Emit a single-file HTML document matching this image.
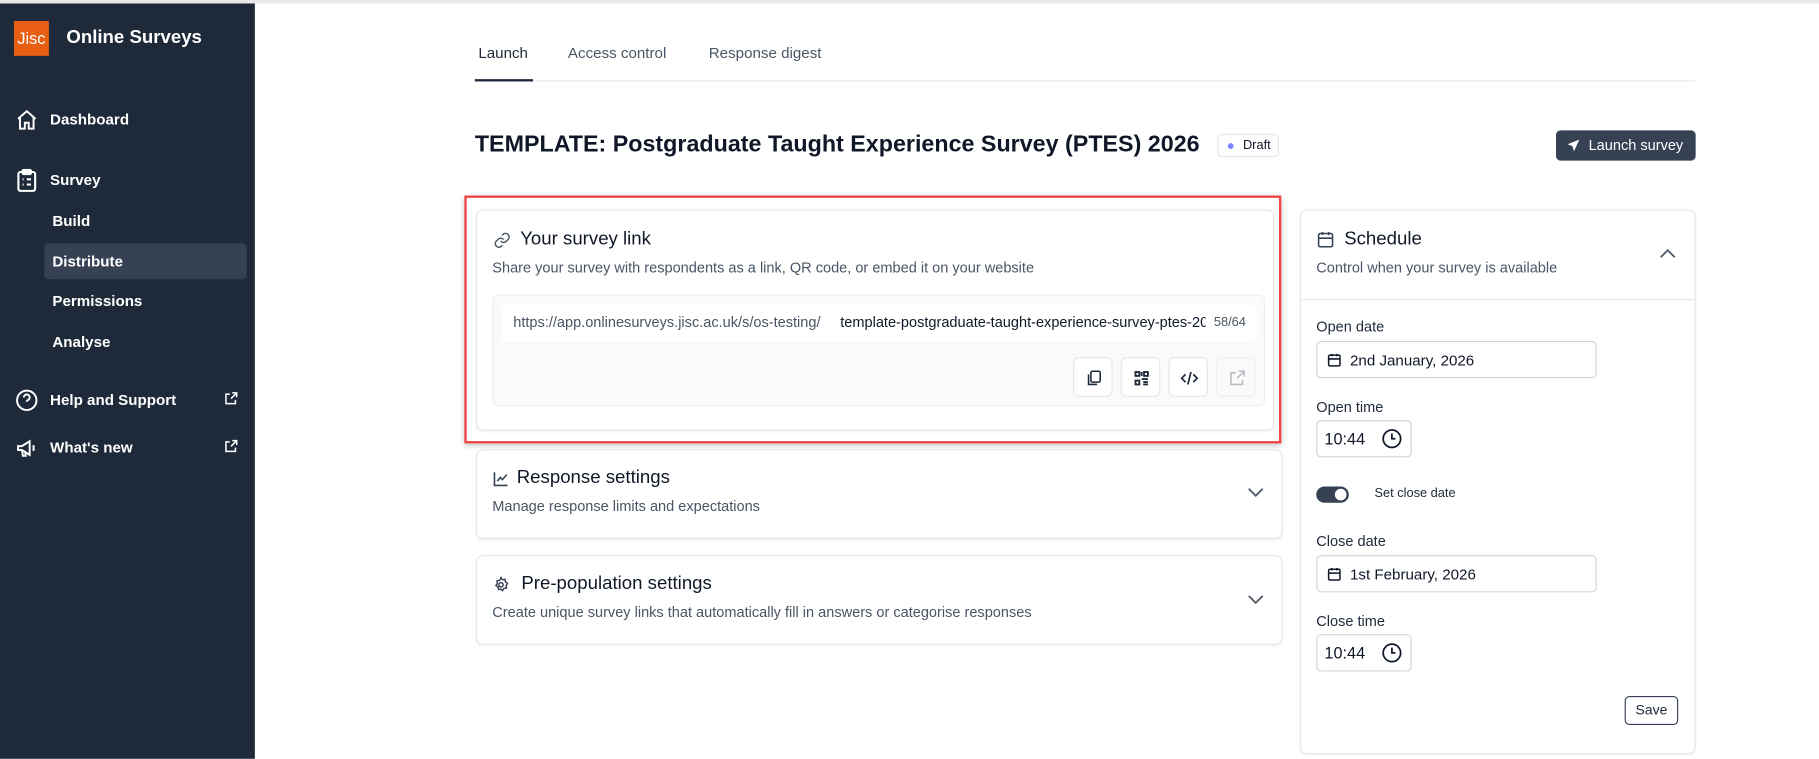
<!DOCTYPE html>
<html><head><meta charset="utf-8">
<style>
*{box-sizing:border-box;margin:0;padding:0}
html,body{width:1819px;height:758px;overflow:hidden;background:#fff;font-family:"Liberation Sans",Arial,sans-serif;}
#s{position:absolute;left:0;top:0;width:1563px;height:652px;transform:scale(1.1638);transform-origin:0 0;}
.a{position:absolute;white-space:nowrap}
.sb{position:absolute;left:0;top:3px;width:219px;height:649px;background:#1e2939;color:#fff}
.nav{position:absolute;font-size:13px;font-weight:bold;color:#fff}
.card{position:absolute;background:#fff;border:1px solid #e5e7eb;border-radius:6px;box-shadow:0 1px 2px rgba(0,0,0,.06)}
.h{font-size:16px;color:#101828}
.d{font-size:12.5px;color:#4a5565}
.btn{position:absolute;width:34px;height:34px;border:1px solid #e5e7eb;border-radius:5px;background:#fff;top:307px}
.btn svg{position:absolute;left:9px;top:9px}
.lbl{position:absolute;font-size:12.5px;color:#1e2939;left:1131px}
.inp{position:absolute;border:1px solid #d1d5dc;border-radius:4px;background:#fff;font-size:13px;color:#101828}
</style></head><body>
<div id="s">
<div class="a" style="left:0;top:0;width:1563px;height:3px;background:#e9e9e9"></div>
<div class="sb">
 <div class="a" style="left:12px;top:15px;width:30px;height:30px;background:#e85e13;color:#fff;font-size:14px;line-height:30px;text-align:center">Jisc</div>
 <div class="a" style="left:57px;top:21px;font-size:16px;font-weight:bold">Online Surveys</div>
 <svg class="a" style="left:13px;top:90px" width="20" height="20" viewBox="0 0 24 24" fill="none" stroke="#fff" stroke-width="2"><path d="M3 11l9-8 9 8M5 9v12h5v-6h4v6h5V9"/></svg>
 <div class="nav" style="left:43px;top:92px">Dashboard</div>
 <svg class="a" style="left:14px;top:142px" width="18" height="20" viewBox="0 0 20 22" fill="none" stroke="#fff" stroke-width="2"><rect x="2" y="3" width="16" height="18" rx="2"/><rect x="6" y="1" width="8" height="4" rx="1"/><path d="M6 10h1M10 10h4M6 15h1M10 15h4"/></svg>
 <div class="nav" style="left:43px;top:144px">Survey</div>
 <div class="nav" style="left:45px;top:179px">Build</div>
 <div class="a" style="left:38px;top:206px;width:174px;height:31px;background:#364153;border-radius:4px"></div>
 <div class="nav" style="left:45px;top:214px">Distribute</div>
 <div class="nav" style="left:45px;top:248px">Permissions</div>
 <div class="nav" style="left:45px;top:283px">Analyse</div>
 <svg class="a" style="left:13px;top:331px" width="20" height="20" viewBox="0 0 24 24" fill="none" stroke="#fff" stroke-width="2"><circle cx="12" cy="12" r="10"/><path d="M9 9a3 3 0 1 1 4 2.8c-.7.3-1 .9-1 1.7M12 17h.01"/></svg>
 <div class="nav" style="left:43px;top:333px">Help and Support</div>
 <svg class="a" style="left:192px;top:333px" width="13" height="13" viewBox="0 0 24 24" fill="none" stroke="#fff" stroke-width="2.4"><path d="M14 3h7v7M21 3l-9 9M19 14v6H4V5h6"/></svg>
 <svg class="a" style="left:13px;top:372px" width="20" height="20" viewBox="0 0 24 24" fill="none" stroke="#fff" stroke-width="2"><path d="M3 10v4h4l8 5V5L7 10H3zM7 14l1 6h3l-1-5M19 9v6"/></svg>
 <div class="nav" style="left:43px;top:374px">What's new</div>
 <svg class="a" style="left:192px;top:374px" width="13" height="13" viewBox="0 0 24 24" fill="none" stroke="#fff" stroke-width="2.4"><path d="M14 3h7v7M21 3l-9 9M19 14v6H4V5h6"/></svg>
</div>

<div class="a" style="left:411px;top:38px;font-size:13px;color:#1e2939">Launch</div>
<div class="a" style="left:488px;top:38px;font-size:13px;color:#4a5565">Access control</div>
<div class="a" style="left:609px;top:38px;font-size:13px;color:#4a5565">Response digest</div>
<div class="a" style="left:408px;top:69px;width:1049px;height:1px;background:#e5e7eb"></div>
<div class="a" style="left:408px;top:68px;width:50px;height:2px;background:#1e2939"></div>

<div class="a" style="left:408px;top:113px;font-size:20px;font-weight:bold;color:#101828">TEMPLATE: Postgraduate Taught Experience Survey (PTES) 2026</div>
<div class="a" style="left:1046px;top:115px;width:53px;height:20px;border:1px solid #e5e7eb;border-radius:4px;font-size:11px;color:#101828;line-height:18px;padding-left:21px">Draft</div>
<div class="a" style="left:1055px;top:123px;width:5px;height:5px;border-radius:50%;background:#7c86ff"></div>
<div class="a" style="left:1337px;top:112px;width:120px;height:26px;background:#364153;border-radius:4px;color:#fff;font-size:12.5px;line-height:26px;padding-left:28px">Launch survey</div>
<svg class="a" style="left:1346px;top:119px" width="12" height="12" viewBox="0 0 24 24" fill="#fff"><path d="M22 2L2 10l8 3 3 9z"/></svg>

<div class="a" style="left:399px;top:168px;width:702px;height:213px;border:2px solid #ef4444;box-shadow:0 2px 5px rgba(0,0,0,.25)"></div>
<div class="card" style="left:409px;top:180px;width:686px;height:190px"></div>
<svg class="a" style="left:424px;top:199px" width="15" height="15" viewBox="0 0 24 24" fill="none" stroke="#4a5565" stroke-width="2"><path d="M10 13a5 5 0 0 0 7.5.5l3-3a5 5 0 0 0-7-7l-1.7 1.7M14 11a5 5 0 0 0-7.5-.5l-3 3a5 5 0 0 0 7 7l1.7-1.7"/></svg>
<div class="a h" style="left:447px;top:197px">Your survey link</div>
<div class="a d" style="left:423px;top:223px">Share your survey with respondents as a link, QR code, or embed it on your website</div>
<div class="a" style="left:423px;top:253px;width:664px;height:96px;background:#f9fafb;border:1px solid #eceef1;border-radius:5px"></div>
<div class="a" style="left:431px;top:262px;width:649px;height:32px;background:#fff;border-radius:4px;overflow:hidden"></div>
<div class="a" style="left:441px;top:270px;font-size:12.5px;color:#4a5565">https://app.onlinesurveys.jisc.ac.uk/s/os-testing/</div>
<div class="a" style="left:722px;top:270px;width:314px;overflow:hidden;font-size:12.5px;color:#101828">template-postgraduate-taught-experience-survey-ptes-2026</div>
<div class="a" style="left:1043px;top:271px;font-size:11px;color:#4a5565">58/64</div>
<div class="btn" style="left:922px"><svg width="16" height="16" viewBox="0 0 24 24" fill="none" stroke="#1e2939" stroke-width="2"><rect x="8" y="3" width="12" height="14" rx="2"/><path d="M5 7v13h11"/></svg></div>
<div class="btn" style="left:963px"><svg width="16" height="16" viewBox="0 0 24 24" fill="none" stroke="#1e2939" stroke-width="2.4"><rect x="4" y="4" width="5" height="5"/><rect x="15" y="4" width="5" height="5"/><rect x="4" y="15" width="5" height="5"/><path d="M12 4v5M12 13h8M14 17h6M14 20h6"/></svg></div>
<div class="btn" style="left:1004px"><svg width="16" height="16" viewBox="0 0 24 24" fill="none" stroke="#1e2939" stroke-width="2.2"><path d="M7 7l-5 5 5 5M17 7l5 5-5 5M14 4l-4 16"/></svg></div>
<div class="btn" style="left:1045px;background:#fafafa;border-color:#eceef1"><svg width="16" height="16" viewBox="0 0 24 24" fill="none" stroke="#b8bcc4" stroke-width="2"><path d="M14 3h7v7M21 3l-9 9M19 14v6H4V5h6"/></svg></div>

<div class="card" style="left:409px;top:386px;width:693px;height:77px"></div>
<svg class="a" style="left:423px;top:404px" width="15" height="15" viewBox="0 0 24 24" fill="none" stroke="#364153" stroke-width="2.2"><path d="M3 3v18h18M7 15l4-5 3 3 6-7"/></svg>
<div class="a h" style="left:444px;top:402px">Response settings</div>
<div class="a d" style="left:423px;top:428px">Manage response limits and expectations</div>
<svg class="a" style="left:1072px;top:418px" width="14" height="10" viewBox="0 0 14 10" fill="none" stroke="#4a5565" stroke-width="1.5"><path d="M1 2l6 6 6-6"/></svg>

<div class="card" style="left:409px;top:477px;width:693px;height:77px"></div>
<svg class="a" style="left:423px;top:495px" width="15" height="15" viewBox="0 0 24 24" fill="none" stroke="#364153" stroke-width="2"><circle cx="12" cy="12" r="3"/><path d="M12 2l2 3 3.5-.5.5 3.5 3 2-2 3 .5 3.5-3.5.5-2 3-2-2-3.5.5-.5-3.5-3-2 2-3-.5-3.5 3.5-.5z"/></svg>
<div class="a h" style="left:448px;top:493px">Pre-population settings</div>
<div class="a d" style="left:423px;top:519px">Create unique survey links that automatically fill in answers or categorise responses</div>
<svg class="a" style="left:1072px;top:510px" width="14" height="10" viewBox="0 0 14 10" fill="none" stroke="#4a5565" stroke-width="1.5"><path d="M1 2l6 6 6-6"/></svg>

<div class="card" style="left:1117px;top:180px;width:340px;height:468px"></div>
<svg class="a" style="left:1131px;top:198px" width="16" height="16" viewBox="0 0 24 24" fill="none" stroke="#364153" stroke-width="2"><rect x="3" y="4" width="18" height="17" rx="2"/><path d="M3 10h18M8 2v4M16 2v4"/></svg>
<div class="a h" style="left:1155px;top:197px">Schedule</div>
<div class="a d" style="left:1131px;top:223px">Control when your survey is available</div>
<svg class="a" style="left:1426px;top:213px" width="14" height="10" viewBox="0 0 14 10" fill="none" stroke="#4a5565" stroke-width="1.5"><path d="M1 8l6-6 6 6"/></svg>
<div class="a" style="left:1118px;top:257px;width:338px;height:1px;background:#e5e7eb"></div>

<div class="lbl" style="top:274px">Open date</div>
<div class="inp" style="left:1131px;top:293px;width:241px;height:32px"></div>
<svg class="a" style="left:1140px;top:303px" width="13" height="13" viewBox="0 0 24 24" fill="none" stroke="#101828" stroke-width="2.4"><rect x="3" y="4" width="18" height="17" rx="2"/><path d="M3 10h18M8 2v4M16 2v4"/></svg>
<div class="a" style="left:1160px;top:302px;font-size:13px;color:#101828">2nd January, 2026</div>
<div class="lbl" style="top:343px">Open time</div>
<div class="inp" style="left:1131px;top:361px;width:82px;height:32px"></div>
<div class="a" style="left:1138px;top:369px;font-size:14px;color:#101828">10:44</div>
<svg class="a" style="left:1187px;top:368px" width="18" height="18" viewBox="0 0 24 24" fill="none" stroke="#101828" stroke-width="2"><circle cx="12" cy="12" r="10"/><path d="M12 6v6h4"/></svg>
<div class="a" style="left:1131px;top:418px;width:28px;height:14px;border-radius:7px;background:#364153"></div>
<div class="a" style="left:1147px;top:420px;width:10px;height:10px;border-radius:50%;background:#fff"></div>
<div class="a" style="left:1181px;top:418px;font-size:11px;color:#1e2939">Set close date</div>
<div class="lbl" style="top:458px">Close date</div>
<div class="inp" style="left:1131px;top:477px;width:241px;height:32px"></div>
<svg class="a" style="left:1140px;top:487px" width="13" height="13" viewBox="0 0 24 24" fill="none" stroke="#101828" stroke-width="2.4"><rect x="3" y="4" width="18" height="17" rx="2"/><path d="M3 10h18M8 2v4M16 2v4"/></svg>
<div class="a" style="left:1160px;top:486px;font-size:13px;color:#101828">1st February, 2026</div>
<div class="lbl" style="top:527px">Close time</div>
<div class="inp" style="left:1131px;top:545px;width:82px;height:32px"></div>
<div class="a" style="left:1138px;top:553px;font-size:14px;color:#101828">10:44</div>
<svg class="a" style="left:1187px;top:552px" width="18" height="18" viewBox="0 0 24 24" fill="none" stroke="#101828" stroke-width="2"><circle cx="12" cy="12" r="10"/><path d="M12 6v6h4"/></svg>
<div class="a" style="left:1396px;top:598px;width:46px;height:25px;border:1px solid #364153;border-radius:4px;font-size:12px;line-height:23px;text-align:center;color:#1e2939">Save</div>
</div>
</body></html>
